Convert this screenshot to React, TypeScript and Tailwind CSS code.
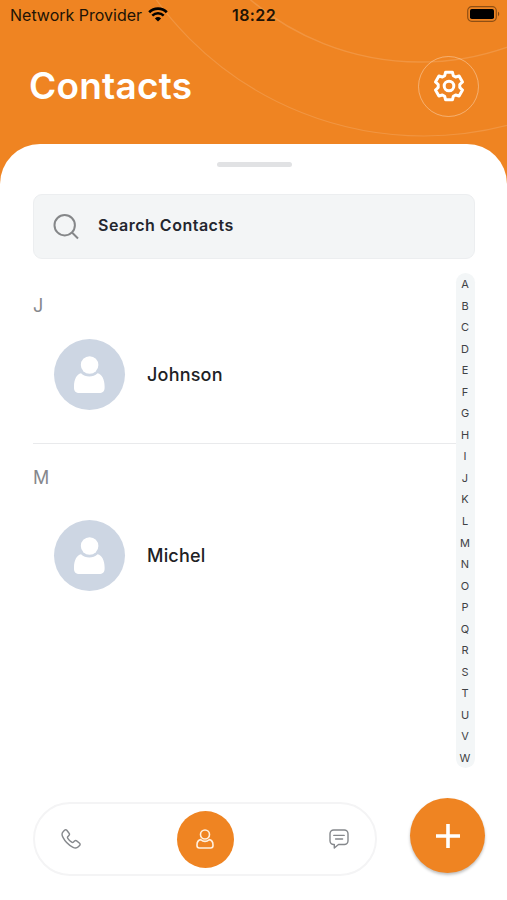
import type { ReactNode } from "react";

type Section = {
  letter: string;
  names: string[];
};

const sections: Section[] = [
  { letter: "J", names: ["Johnson"] },
  { letter: "M", names: ["Michel"] },
];

const alphabet = "ABCDEFGHIJKLMNOPQRSTUVW".split("");

export default function App() {
  return (
    <div className="relative flex h-[900px] w-[507px] flex-col overflow-hidden bg-[#ef8422] font-['Inter',sans-serif]">
      <HeaderArcs />
      <StatusBar />
      <header className="relative flex h-[114px] items-center justify-between pr-7 pb-[2px] pl-[29px]">
        <h1 className="mb-[2px] text-[37px] leading-none font-[560] tracking-[0.2px] text-white">Contacts</h1>
        <button
          type="button"
          aria-label="Settings"
          className="flex size-[61px] items-center justify-center rounded-full border border-white/35 text-white"
        >
          <GearIcon />
        </button>
      </header>

      <main className="relative flex flex-1 flex-col rounded-t-[40px] bg-white pr-8 pl-[33px]">
        <div className="mt-[18px] h-[5px] w-[75px] self-center rounded-full bg-[#e1e2e4]" />
        <SearchField />
        <div className="mt-[14px] flex h-[495px]">
          <div className="flex-1">
            {sections.map((section, index) => (
              <ContactSection key={section.letter} section={section} divided={index > 0} />
            ))}
          </div>
          <AlphabetIndex />
        </div>
        <div className="-mr-3 mt-[34px] flex items-start">
          <TabBar />
          <button
            type="button"
            aria-label="Add contact"
            className="-mt-1 ml-[33px] flex size-[75px] shrink-0 items-center justify-center rounded-full bg-[#ef8422] text-white shadow-[0_2px_3px_rgba(0,0,0,0.25)]"
          >
            <svg viewBox="0 0 24 24" className="size-6" stroke="currentColor" strokeWidth="3.6" aria-hidden="true">
              <path d="M12 0v24M0 12h24" />
            </svg>
          </button>
        </div>
      </main>
    </div>
  );
}

function HeaderArcs() {
  return (
    <svg
      viewBox="0 0 507 200"
      className="absolute top-0 left-0 h-[200px] w-[507px]"
      fill="none"
      stroke="#fff"
      strokeOpacity="0.14"
      aria-hidden="true"
    >
      <circle cx="420" cy="-200" r="262" strokeWidth="1.4" />
      <circle cx="424" cy="-195" r="331" strokeWidth="1.2" />
    </svg>
  );
}

function StatusBar() {
  return (
    <div className="relative flex h-[30px] items-center text-[#211305]">
      <span className="ml-[10px] w-[132px] text-[16px] leading-none whitespace-nowrap">Network Provider</span>
      <svg viewBox="0 0 20 15" className="mb-px ml-[6px] h-[15px] w-5 shrink-0" fill="none" stroke="#000" aria-hidden="true">
        <path d="M1.2 5.2a12.6 12.6 0 0 1 17.6 0" strokeWidth="2.7" />
        <path d="M4.3 8.6a8.2 8.2 0 0 1 11.4 0" strokeWidth="2.5" />
        <path d="M10 14.6 6.9 11.4a4.5 4.5 0 0 1 6.2 0z" fill="#000" stroke="none" />
      </svg>
      <span className="ml-[64px] text-[16px] leading-none font-semibold tracking-[0.4px]">18:22</span>
      <svg viewBox="0 0 33 16" className="mr-[7px] mb-[2px] ml-auto h-4 w-[33px]" aria-hidden="true">
        <rect x="0.7" y="0.7" width="28.6" height="14.6" rx="4" fill="none" stroke="#000" strokeOpacity="0.4" strokeWidth="1.2" />
        <rect x="3" y="3" width="24" height="10" rx="1.8" />
        <path d="M31 5.8c1.6.6 1.6 3.8 0 4.4z" fillOpacity="0.45" />
      </svg>
    </div>
  );
}

function GearIcon() {
  return (
    <svg
      viewBox="0 0 32 32"
      className="size-8"
      fill="none"
      stroke="currentColor"
      strokeWidth="3"
      strokeLinejoin="round"
      aria-hidden="true"
    >
      <circle cx="16" cy="16" r="4.8" />
      <path d="M12.6 2.2h6.8l.9 3.5 2.3 1.3 3.5-1 3.4 5.9-2.7 2.6v3l2.7 2.6-3.4 5.9-3.5-1-2.3 1.3-.9 3.5h-6.8l-.9-3.5L9.4 25l-3.5 1-3.4-5.9 2.7-2.6v-3l-2.7-2.6L5.9 6l3.5 1 2.3-1.3z" />
    </svg>
  );
}

function SearchField() {
  return (
    <div className="mt-[27px] flex h-[65px] items-center rounded-[9px] border border-[#eceef0] bg-[#f3f5f6] pl-[19px]">
      <svg viewBox="0 0 26 26" className="size-[26px]" fill="none" stroke="#858789" strokeWidth="2" aria-hidden="true">
        <circle cx="11.7" cy="11.2" r="10.2" />
        <path d="m19 18.500 6 6" />
      </svg>
      <span className="mb-[3px] ml-[19px] text-[16px] leading-none font-semibold tracking-[0.5px] text-[#24262e]">
        Search Contacts
      </span>
    </div>
  );
}

function ContactSection({ section, divided }: { section: Section; divided: boolean }) {
  return (
    <section className={divided ? "border-t border-[#e9eaec] pt-6" : "pt-[23px]"}>
      <h2 className="h-5 text-[18px] leading-5 text-[#85878c]">{section.letter}</h2>
      {section.names.map((name) => (
        <div
          key={name}
          className={
            divided
              ? "mt-[32px] flex items-center pl-[21px]"
              : "mt-[23px] mb-[33px] flex items-center pl-[21px]"
          }
        >
          <Avatar />
          <span className="mt-px ml-[22px] text-[18px] leading-none font-medium tracking-[0.2px] text-[#202124]">
            {name}
          </span>
        </div>
      ))}
    </section>
  );
}

function Avatar() {
  return (
    <div className="flex size-[71px] items-center justify-center rounded-full bg-[#cdd6e3]">
      <svg viewBox="0 0 71 71" className="size-[71px]" fill="#fff" aria-hidden="true">
        <circle cx="35.6" cy="26" r="8.8" />
        <path d="M27 34.2c4.6 4.3 12 4.3 16.6 0 4.3.8 7 6.500 7 13v1.500c0 3.500-2 5.300-5.500 5.300H25.500c-3.500 0-5.500-1.800-5.500-5.300V47.200c0-6.500 2.700-12.200 7-13z" />
      </svg>
    </div>
  );
}

function AlphabetIndex() {
  return (
    <nav className="flex w-[19px] flex-col items-center rounded-full bg-[#f3f6f7] pr-px">
      {alphabet.map((letter) => (
        <span key={letter} className="h-[21.55px] text-[11px] leading-[22px] text-[#3f4245]">
          {letter}
        </span>
      ))}
    </nav>
  );
}

function TabBar() {
  return (
    <nav className="flex h-[74px] w-[344px] shrink-0 items-center justify-between rounded-full border-2 border-[#f4f4f5] px-[26px]">
      <TabIcon>
        <path d="M5.8 1.3c-.6-.7-1.6-.7-2.300 0L1.900 3C.7 4.200.9 6.300 2 8.400c2.200 4.300 5.500 7.500 9.600 9.700 2.100 1.100 4.200 1.200 5.400 0l1.600-1.600c.7-.7.7-1.700 0-2.300l-2.900-2.300c-.7-.6-1.500-.5-2.200.2l-1.200 1.200c-.5.4-1 .3-1.600-.1a13 13 0 0 1-3.900-3.900c-.4-.6-.5-1.100-.1-1.600l1.200-1.200c.7-.7.8-1.500.2-2.200z" />
      </TabIcon>
      <span className="flex size-[57px] items-center justify-center rounded-full bg-[#ef8422] text-[#fff0df]">
        <svg viewBox="0 0 20 20" className="size-5" fill="none" stroke="currentColor" strokeWidth="1.6" aria-hidden="true">
          <circle cx="10" cy="5.5" r="4.5" />
          <path d="M5.6 10.6c2.6 2.1 6.2 2.1 8.8 0 2.2.4 3.6 2.8 3.6 5.400v.6c0 1.500-.9 2.400-2.400 2.400H4.400C2.900 19 2 18.100 2 16.600V16c0-2.600 1.400-5 3.600-5.400z" />
        </svg>
      </span>
      <TabIcon>
        <path d="M4.7 1h10.600A3.700 3.700 0 0 1 19 4.700v7.100a3.700 3.700 0 0 1-3.700 3.700H9.500L5.300 19v-3.500h-.6A3.700 3.700 0 0 1 1 11.800V4.700A3.700 3.700 0 0 1 4.700 1zM4.800 6.400h10.400M6.600 10h7" />
      </TabIcon>
    </nav>
  );
}

function TabIcon({ children }: { children: ReactNode }) {
  return (
    <svg
      viewBox="0 0 20 20"
      className="size-5 text-[#85888c]"
      fill="none"
      stroke="currentColor"
      strokeWidth="1.4"
      strokeLinecap="round"
      strokeLinejoin="round"
      aria-hidden="true"
    >
      {children}
    </svg>
  );
}
